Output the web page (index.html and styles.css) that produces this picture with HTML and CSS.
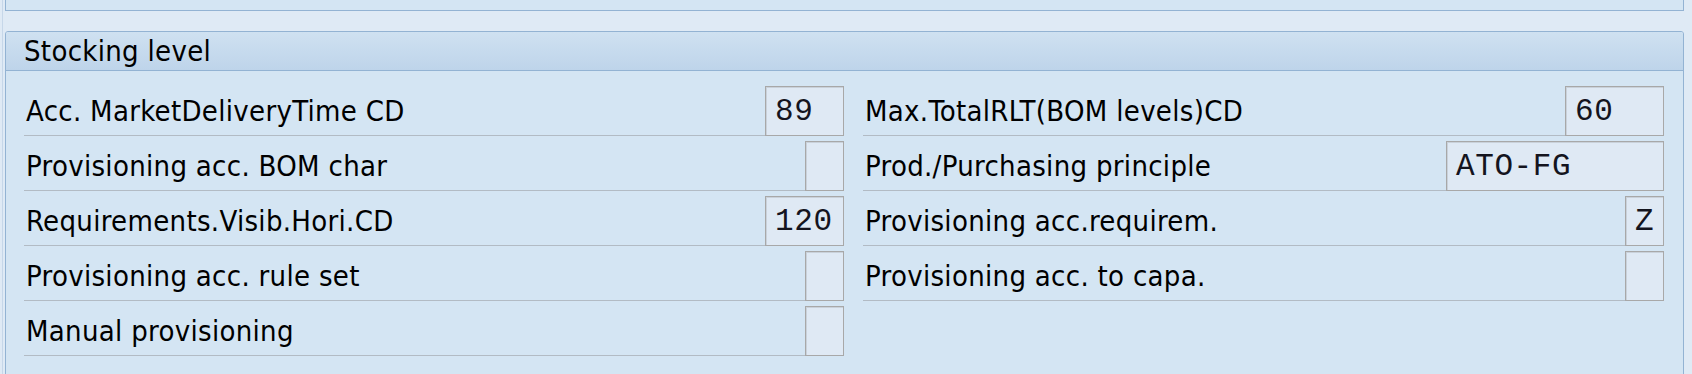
FILE: index.html
```html
<!DOCTYPE html>
<html lang="en">
  <head>
    <meta charset="UTF-8" />
    <title>Stocking level</title>
    <link rel="stylesheet" href="styles.css">
  </head>
  <body>
    <div class="screen">
      <div class="frame">
        <!-- tail end of the group above -->
        <div class="panel panel-prev"></div>

        <section class="panel group">
          <div class="group-title">Stocking level</div>

          <div class="group-body">
            <div class="field">
              <span class="field-label">Acc. MarketDeliveryTime CD</span>
              <span class="input w-num">89</span>
            </div>
            <div class="field">
              <span class="field-label">Max.TotalRLT(BOM levels)CD</span>
              <span class="input w-num-wide">60</span>
            </div>

            <div class="field">
              <span class="field-label">Provisioning acc. BOM char</span>
              <span class="input w-flag"></span>
            </div>
            <div class="field">
              <span class="field-label">Prod./Purchasing principle</span>
              <span class="input w-code">ATO-FG</span>
            </div>

            <div class="field">
              <span class="field-label">Requirements.Visib.Hori.CD</span>
              <span class="input w-num">120</span>
            </div>
            <div class="field">
              <span class="field-label">Provisioning acc.requirem.</span>
              <span class="input w-flag">Z</span>
            </div>

            <div class="field">
              <span class="field-label">Provisioning acc. rule set</span>
              <span class="input w-flag"></span>
            </div>
            <div class="field">
              <span class="field-label">Provisioning acc. to capa.</span>
              <span class="input w-flag"></span>
            </div>

            <div class="field">
              <span class="field-label">Manual provisioning</span>
              <span class="input w-flag"></span>
            </div>
          </div>
        </section>
      </div>
    </div>
  </body>
</html>
```

FILE: styles.css
```css
:root {
  /* SAP GUI blue crystal-ish palette */
  --page-bg: #dfeaf5;
  --panel-bg: #d4e5f3;
  --panel-border: #93b3d3;
  --title-top: #cfe1f1;
  --title-bottom: #bed4ea;
  --line: #b2bbc4;
  --input-bg: #dfe9f4;
  --input-border: #a8a8a8;
  --text: #000;
}

html,
body {
  margin: 0;
  height: 100%;
  overflow: hidden;
}

body {
  background-color: var(--page-bg);
  color: var(--text);
  font-family: "DejaVu Sans Condensed", "DejaVu Sans", sans-serif;
  font-size: 29px;
  letter-spacing: 0.3px;
}

.screen {
  padding-left: 2px;
  height: 100%;
}

.frame {
  border-left: 1px solid #c6d7e9;
  padding-left: 2px;
  height: 100%;
  width: 1680px;
}

.panel {
  background-color: var(--panel-bg);
  border: 1px solid var(--panel-border);
  width: 1677px;
}

.panel-prev {
  height: 10px;
  border-top: none;
  margin-bottom: 20px;
}

.group {
  border-radius: 3px 3px 0 0;
}

.group-title {
  height: 38px;
  line-height: 38px;
  padding-left: 18px;
  background: linear-gradient(to bottom, var(--title-top), var(--title-bottom));
  border-bottom: 1px solid var(--panel-border);
  border-radius: 2px 2px 0 0;
}

.group-body {
  display: grid;
  grid-template-columns: 820px 801px;
  column-gap: 19px;
  row-gap: 5px;
  padding: 15px 19px 40px 18px;
}

.field {
  display: flex;
  height: 50px;
}

.field-label {
  flex: 1;
  box-sizing: border-box;
  height: 50px;
  padding-top: 2px;
  padding-left: 2px;
  line-height: 47px;
  border-bottom: 1px solid var(--line);
  white-space: nowrap;
}

.input {
  box-sizing: border-box;
  height: 50px;
  display: flex;
  align-items: center;
  padding-left: 9px;
  background-color: var(--input-bg);
  border: 1px solid var(--input-border);
  box-shadow: inset 1px 1px 0 #c9d1da;
  font-family: "Liberation Mono", monospace;
  font-size: 31px;
  letter-spacing: 0.6px;
  color: #14141e;
}

.w-num {
  width: 79px;
}

.w-num-wide {
  width: 99px;
}

.w-code {
  width: 218px;
}

.w-flag {
  width: 39px;
}
```
